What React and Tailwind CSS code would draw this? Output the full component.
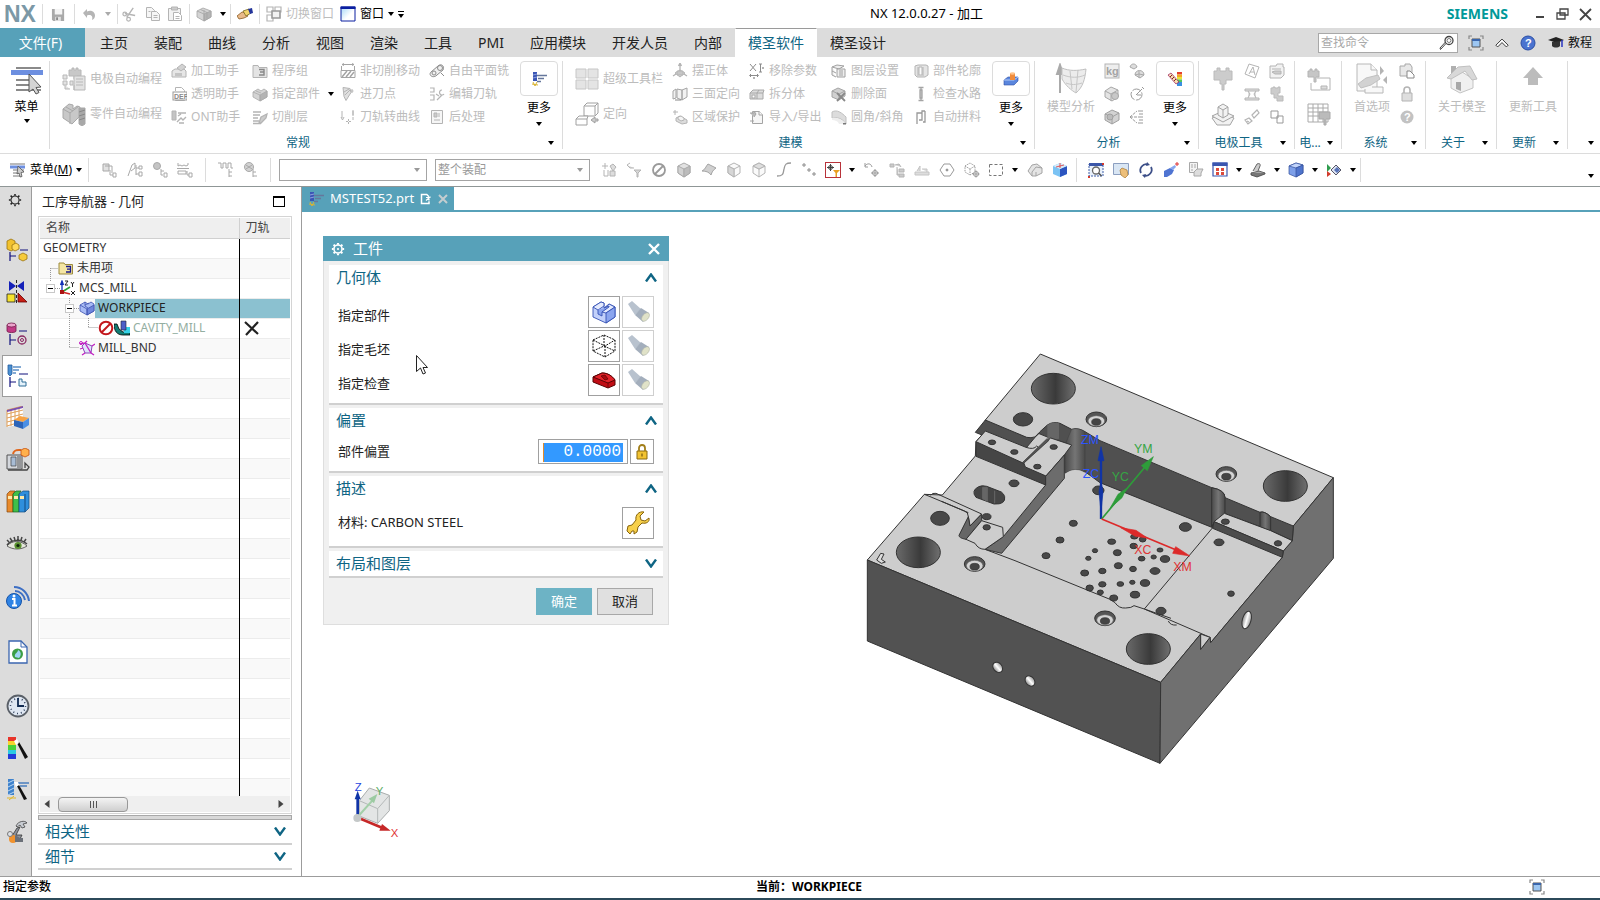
const G = '#b4b4b4'
const L = '#e6e6e6'

// small icons, drawn on a 16 x 16 grid
const icons = {
  save: <><path d="M1 2h13v13H2.500L1 13.500z" fill="#a9a9a9" /><path d="M4 2h8v6H4z" fill="#f4f4f4" /><path d="M4.500 10.500h6V15h-6z" fill="#e2e2e2" /><path d="M5.500 11h2v3h-2z" fill="#888" /></>,
  undo: <path d="M2 8l4-4v2.500c5-2 8 1 8 4 0 2-1 3.500-3 4.500 1-3 0-6-5-4.500V13z" transform="translate(0 -1)" fill="#b5b5b5" />,
  cut: <><path d="M12 1L5 11M3 7l11 2" stroke={G} strokeWidth="1.500" /><circle cx="3" cy="7.500" r="2" fill="none" stroke={G} strokeWidth="1.300" /><circle cx="7" cy="13" r="2" fill="none" stroke={G} strokeWidth="1.300" /></>,
  copy: <g fill="#f6f6f6" stroke={G}><path d="M1.500 1.500h5l3 3v7h-8z" /><path d="M6.500 5.500h5l3 3v6h-8z" /><path d="M8.500 9.500h4M8.500 11.500h4M3.500 5.500h2" /></g>,
  paste: <g fill="#f2f2f2" stroke={G}><path d="M1.500 2.500h12v12h-12z" /><path d="M4.500 1h6v3h-6z" fill="#ccc" /><path d="M6.500 6.500h5l3 3v5h-8z" fill="#fff" /><path d="M8.500 10.500h4M8.500 12.500h4" /></g>,
  cubes: <g stroke="#a4a4a4" strokeWidth=".8"><path d="M1 5l6-3 8 3v6l-7 4-7-4z" fill="#d4d4d4" /><path d="M8 8l7-3v6l-7 4z" fill="#b4b4b4" /><path d="M1 5l7 3v7M4.500 3.500L11 6.500v6M8 8V4" fill="none" /></g>,
  marker: <g><path d="M0 10l5-4 4 1 2 3-4 2-5 1z" fill="#e9b98a" stroke="#8a5a20" strokeWidth=".8" /><path d="M6 5l6-2 2 4-5 3z" fill="#f1d36b" stroke="#7a6a20" strokeWidth=".8" /><path d="M11 3l4-1 1 5-3 1z" fill="#23349b" /></g>,
  swap: <g fill="none" stroke={G} strokeWidth="1.200"><path d="M1 1h6v5H1zM9 1h6v5H9zM1 9h6v6H1z" /><path d="M6 5h8v7H6z" fill="#f2f2f2" stroke="#999" strokeWidth="1.600" /></g>,
  windowBlue: <><defs><linearGradient id="wb" x1="0" y1="0" x2="1" y2="1"><stop offset=".2" stopColor="#c2e4fa" /><stop offset=".6" stopColor="#fff" /></linearGradient></defs><path d="M1 1h14v14H1z" fill="url(#wb)" stroke="#0a1fa0" /><path d="M.5.5h15V3H.5z" fill="#0a1fa0" /></>,
  helper: <g fill={L} stroke={G}><path d="M1 8l3-2h9l2 2v6H1z" /><path d="M6 5l5-4 4 3-5 4z" fill="#d2d2d2" /><path d="M4 10h7v3H4z" fill="#c4c4c4" stroke="none" /></g>,
  def: <><path d="M4.500 5V1.500h6l3 3v10h-9V13" fill="#fff" stroke={G} /><rect x="2" y="6" width="14" height="8" fill="#fff" stroke="#999" /><text x="3" y="13" fontSize="7" fontWeight="700" fill="#888" fontFamily="Liberation Sans">DEF</text></>,
  ont: <g fill="none" stroke={G}><path d="M1 2h4v9H1z" fill="#c4c4c4" /><path d="M7 4h8M7 7l3-2M6 13l4-4 2 2 3-3M8 14h5" strokeWidth="1.400" /></g>,
  folderGroup: <g stroke={G}><path d="M1 2.500h5l1 2h8v10H1z" fill="#e4e4e4" /><path d="M7 6.500h5v5.500H7M8 9h4" fill="none" stroke="#888" strokeWidth="1.400" /></g>,
  part: <g stroke="#aaa" strokeWidth=".8"><path d="M1 6l5-3 3 2 3-2 3 2v6l-7 4-7-4z" fill="#d4d4d4" /><path d="M8 9l7-4v6l-7 4z" fill="#b4b4b4" /><path d="M1 6l7 3v6M4 5l5 2" fill="none" /></g>,
  layers: <g fill="none" stroke={G} strokeWidth="1.300"><path d="M1 3h8M1 6h7M1 9h5M1 12h6M1 14.500h8" /><path d="M9 8l6-3-1 4-5 5H7z" fill="#ccc" /></g>,
  nonCut: <g fill="none" stroke="#a4a4a4"><path d="M2 1.500h12M2 1.500l2-1M2 1.500l2 1M14 1.500l-2-1M14 1.500l-2 1M1.500 3v4M14.500 3v4M1 7.500h14v7H1z" /><path d="M2 14l5-6M6 14l5-6M10 14l4-5" strokeWidth="1.500" /></g>,
  entry: <g stroke={G} fill="#e0e0e0"><path d="M3 1.500l7 1 1 4-5 8-2-4z" /><path d="M4 6l5-3M5 9l5-5M12 3v4M10.500 5h3" fill="none" /></g>,
  toCurve: <g fill="none" stroke={G}><path d="M2 2v7M1 8l1.500 3L4 8M13 1v6M12 3h2M12 5h2M13 8v3" /><path d="M6 12.500h5M8.500 10v5" strokeDasharray="2 1" /></g>,
  planar: <g fill="#f0f0f0" stroke="#8c8c8c"><path d="M2 9l7-6c3-3 7 0 5 4l-6 5c-4 4-9 0-6-3z" /><circle cx="5" cy="10" r="2" /><circle cx="11" cy="5" r="2.500" /><path d="M12 10l3 3" /></g>,
  editPath: <g fill="none" stroke={G} strokeWidth="1.200"><path d="M1 2h4v4H1M1 9h4v5H1M8 14l5-5M7 8l3 2M13 4a2.500 2.500 0 1 0 2 4" /></g>,
  post: <g stroke={G} fill="#f6f6f6"><path d="M2.500 1.500h11v13h-11z" /><path d="M5 4h3v4H5zM10 4v4M5 11h6" fill="#ccc" /></g>,
  alignBody: <g stroke={G} fill="#ddd"><path d="M3 10l5-3 5 3-5 4z" /><path d="M8 8V1M6.500 3L8 0l1.500 3M1 13l3-2M15 13l-3-2" fill="none" strokeWidth="1.300" /><path d="M5 8h6v4H5z" fill="#c6c6c6" /></g>,
  triFace: <g stroke="#a4a4a4" fill="#f2f2f2"><path d="M1 5l3-2v9l-3 1zM5 3l5 1v10l-5-2zM10 4l5-2v9l-5 3z" /><path d="M3 14h6" stroke="#888" /></g>,
  region: <g stroke={G} fill="#dcdcdc"><path d="M3 1v5M1 3h5" fill="none" /><path d="M4 9l4-2 7 4v3l-5 1-6-3z" /><path d="M6 8l3-1 3 2v2l-3 1-3-2z" fill="#f4f4f4" /></g>,
  removeParam: <g fill="none" stroke="#8c8c8c"><path d="M1 1l6 7M7 1L1 8M10 1h3M11.500 1v8M10 9h3M1 12.500h8M2 11l-1.500 1.500L2 14M8 11l1.500 1.500L8 14" /><path d="M13 4l2 2M15 4l-2 2M4 14l2 2M6 14l-2 2" stroke="#b4b4b4" /></g>,
  splitBody: <g stroke="#a8a8a8" fill="#ddd"><path d="M1 7l3-3h11l-1 3v6H1z" /><path d="M1 7h13M8 7v6M8 7l2-3" fill="none" /><rect x="3" y="9" width="3" height="3" fill="#fff" /></g>,
  importExport: <g stroke="#a4a4a4" fill="#f6f6f6"><path d="M3.500 2.500h7l3 3v9h-10z" /><path d="M10 2v4h4" /><path d="M1 4h4V2l2 3-2 3M1 12h4" fill="#bbb" /></g>,
  layerSet: <g stroke="#a0a0a0" fill="#eee"><path d="M1 4l5-2 7 1-5 3z" /><path d="M1 4v4l4 2M1 8v4l4 2M8 6h6v8H6V6z" /><path d="M8 8h4M8 10h4M8 12h4" /></g>,
  deleteFace: <g stroke="#a4a4a4"><path d="M1 5l6-3 7 3v5l-6 4-7-3z" fill="#d0d0d0" /><path d="M1 5l7 3v6M8 8l6-3" fill="none" /><path d="M6 7l8 8M14 7l-8 8" stroke="#888" strokeWidth="1.800" /></g>,
  fillet: <g><path d="M1 3c5-3 10 1 14 5v7C11 9 6 8 1 9z" fill="#dcdcdc" stroke="#c0c0c0" /><path d="M1 9c5-1 10 1 14 6H8C7 12 4 11 1 11z" fill="#eee" /><path d="M12 14h3v1.500h-3z" fill="#777" /></g>,
  outline: <g stroke={G} fill="#e4e4e4"><path d="M2 3l3-1h8l2 1v9l-3 2H4l-2-2z" /><path d="M5 4v9M10 4v9M6 4h3v8H6z" fill="#fafafa" /></g>,
  waterLine: <g fill="none" stroke="#a4a4a4" strokeWidth="1.300"><path d="M5.500 1.500h5M8 2v12M5.500 14.500h5" /><path d="M7 4v8h2V4z" fill="#ccc" /></g>,
  autoJoin: <g fill="none" stroke="#999" strokeWidth="1.300"><path d="M4 15V4h5v7H6M12 2v11h-2M9 4V2h3" /></g>,
  kg: <><rect x="1" y="1" width="14" height="14" fill="#eee" stroke={G} /><text x="2" y="12" fontSize="11" fontWeight="700" fill="#a4a4a4" fontFamily="Liberation Sans">kg</text></>,
  cubeHole: <g stroke="#a8a8a8" fill="#e4e4e4"><path d="M1 5l6-4 7 3v7l-6 4-7-4z" /><path d="M1 5l6 3 7-4M7 8v7" fill="none" /><circle cx="11" cy="10" r="3.500" fill="#c8c8c8" /></g>,
  cubeDark: <g stroke="#a0a0a0" fill="#d2d2d2"><path d="M1 5l7-4 7 3v7l-7 4-7-4z" /><path d="M1 5l7 3 7-4M8 8v7" fill="none" /><circle cx="6" cy="8" r="3" fill="#bbb" /></g>,
  spheres: <g stroke="#a8a8a8" fill="#ddd"><path d="M1 4c1-4 6-4 7 0l-3 2zM6 12c0-6 9-6 9 0l-4 3z" /><path d="M10 8v7M6 12l4-1 5 1" fill="none" /></g>,
  gauge: <g fill="none" stroke="#999"><circle cx="7.500" cy="8.500" r="5.500" strokeDasharray="9 1.500" /><path d="M7 9l6-6M13 1l2 2M8 9h4" /></g>,
  branch: <g fill="none" stroke="#999"><path d="M1 8l7-6M1 8l7 6M1 8h7" strokeDasharray="3 1" /><path d="M9 2h5M10 5h4M9 8h5M10 11h4M9 14h5" /></g>,
  tilt: <g fill="none" stroke={G}><path d="M5 1l10 3-4 11-10-4z" /><path d="M5 11l4-7 2 8M6 9h4" /></g>,
  formH: <g fill="#e0e0e0" stroke={G}><path d="M1 3h14v2H1zM1 12h14v2H1zM4 5l2 3-2 4M12 5l-2 3 2 4" /></g>,
  pencils: <g fill="none" stroke={G} strokeWidth="1.200"><path d="M1 11l4-2 3 3-4 3zM8 6l5-5 2 3-5 5zM3 12l2 1" /></g>,
  card: <g fill="#f2f2f2" stroke={G}><path d="M1 3h6l1-2h6v3h1v8l-3 3H1z" /><path d="M3 6h9M3 9l3-1h6v3H6z" fill="#ccc" /></g>,
  toolBody: <g fill="#ccc" stroke="#bbb"><path d="M2 2h2V1h2v1h3V1h2v6H9v3h5v5H8v-3H5V8H2z" /></g>,
  twoSquares: <g fill="#fff" stroke="#999"><path d="M2 2h7v7H2zM8 7h6v7H8z" /></g>,
  pageCopy: <g fill="#e8e8e8" stroke="#a8a8a8"><path d="M1 3h5V1h5l2 3v9H1z" /><path d="M8 8h3l4 4v3H8z" fill="#fff" stroke="#888" /></g>,
  lockGray: <g fill="#dedede" stroke={G}><path d="M3 7h10v8H3z" /><path d="M5 7V4a3 3 0 0 1 6 0v3" fill="none" strokeWidth="1.600" /></g>,
  helpGray: <><circle cx="8" cy="8" r="6.500" fill="#c2c2c2" /><text x="5" y="12" fontSize="11" fontWeight="700" fill="#fff" fontFamily="Liberation Sans">?</text></>,
  moreMill: <><path d="M2 1h4v9H2z" fill="#3b56b5" /><path d="M2 4l4-1M2 7l4-1" stroke="#8ea0dc" /><path d="M6 4.500h10M7 7.500h6M6 10.500h4" stroke="#66779c" strokeWidth="1.400" /><path d="M2 11l2 4 2-4M1 13l6 1" stroke="#d9b433" fill="none" /></>,
  moreModel: <><path d="M1 9l4-3h10v4l-4 4H1z" fill="#5a86dd" stroke="#2d4fa5" strokeWidth=".6" /><path d="M1 9h10l4-3" stroke="#b6cdf8" fill="none" /><path d="M7 2h5v7H7z" fill="#f08c3c" /><ellipse cx="9.500" cy="2.500" rx="2.500" ry="1.300" fill="#ffc48c" /></>,
  moreAnalysis: <><path d="M10 1h5v2.500h-5z" fill="#e5402e" /><path d="M10 3.500h5V6h-5z" fill="#f5a623" /><path d="M10 6h5v2.500h-5z" fill="#e8e33a" /><path d="M10 8.500h5V11h-5z" fill="#53c65a" /><path d="M10 11h5v4h-5z" fill="#3a8fe0" /><path d="M1 4l3-2 8 9-3 2z" fill="#f6e2b0" stroke="#915" strokeWidth=".7" /><path d="M3 6l2-2M5 8l2-2M7 10l2-2" stroke="#822" /></>,
  menuSmall: <><path d="M0 2h15M3 8h11M3 11h8M3 14h8" stroke="#777" /><path d="M0 3.500h15v3H0z" fill="#6d8fe0" /><path d="M8 4l6 6-3 .500 1 4-2 .500-1-4-2 1z" fill="#ccc" stroke="#555" strokeWidth=".8" /></>,
  tree1: <g fill="#e2e2e2" stroke="#a8a8a8"><path d="M1 2h6v7H1z" /><path d="M3 4h7v7M8 8v5h3M11 11h3v4h-3z" fill="none" /></g>,
  tree2: <g fill="none" stroke="#a8a8a8"><path d="M1 14l4-11 3-2v5l-4 3M9 3v10M9 6h3M12 4h3v3h-3zM9 12h3M12 10h3v4h-3z" /></g>,
  tree3: <g fill="#c4c4c4" stroke="#a8a8a8"><circle cx="5" cy="4" r="3.500" /><path d="M9 7v6h2M12 11h3v4h-3zM9 9h3" fill="none" /></g>,
  tree4: <g fill="none" stroke="#a8a8a8"><path d="M1 1v3l2-1 2 1 2-1 2 1 2-1V1M0 6.500h12M1 9h8v3H1zM10 9v4h2M12 11h3v4h-3z" /></g>,
  tree5: <g fill="none" stroke="#a8a8a8"><path d="M0 1h3v5h2V1h3v5h2V1h3v5h2M11 7v8M11 10h3M11 14h3" /></g>,
  tree6: <g fill="#d2d2d2" stroke="#a8a8a8"><circle cx="6" cy="5" r="4.500" /><path d="M3 3l6 4M3 7l6-4M10 7v8M10 10h3M10 14h4" fill="none" /></g>,
  selA: <g fill="none" stroke={G}><path d="M4 1v6M1 4h6M3 8v6h4M7 8v6" /><path d="M9 4l3-2 3 3-3 4zM9 9h5v5H9z" fill="#ddd" /></g>,
  selB: <g fill="#d8d8d8" stroke={G}><path d="M1 3l3 3h4M1 3l3-2M8 8h7l-3 3v4h-1v-4z" /></g>,
  noEntry: <g fill="none" stroke="#9a9a9a" strokeWidth="1.800"><circle cx="8" cy="8" r="6" /><path d="M12 4l-8 8" /></g>,
  cubeSolid: <g stroke="#aaa" fill="#e2e2e2"><path d="M2 4l6-3 6 3v7l-6 4-6-4z" /><path d="M2 4l6 3v8l-6-4z" fill="#d2d2d2" /><path d="M8 7l6-3v7l-6 4z" fill="#bcbcbc" /></g>,
  sheet: <path d="M1 9c3-1 4-5 6-7l8 4c-3 2-4 4-5 7-2-3-5-4-9-4z" fill="#d0d0d0" stroke="#a4a4a4" />,
  cubeFace: <g stroke={G} fill="#fafafa"><path d="M2 4l6-3 6 3v7l-6 4-6-4z" /><path d="M2 4l6 3 6-3M8 7v8" /><path d="M2 4l6 3v8l-6-4z" fill="#d6d6d6" /></g>,
  cubeEdge: <g stroke={G} fill="#fafafa"><path d="M2 4l6-3 6 3v7l-6 4-6-4z" /><path d="M2 4l6 3 6-3M8 7v8" /><path d="M2 4l6 3 6-3-6-3z" fill="#dedede" /></g>,
  curve: <path d="M1 14c7 0 6-3 7-7 1-5 2-6 7-6" fill="none" stroke="#999" strokeWidth="1.300" />,
  plusses: <path d="M1 3h4M3 1v4M6 8h4M8 6v4M11 12h4M13 10v4" stroke="#8c8c8c" />,
  snapFilter: <><rect x=".5" y=".5" width="15" height="15" fill="#fff" stroke="#b8323a" /><path d="M5.500 2v7M2 5.500h7" stroke="#444" /><circle cx="5.500" cy="5.500" r="2" fill="none" stroke="#444" /><path d="M8 8h7l-3 3v4h-1.500v-4z" fill="#e8a020" /></>,
  arcTarget: <g fill="none" stroke="#999"><path d="M1 4c2-3 6-3 7 1M1 1v4h3M11 7v8M7 11h8" /><circle cx="11" cy="11" r="2.500" /></g>,
  snapTree: <g fill="#ccc" stroke={G}><path d="M1 2h4v3H1zM6 3l4-1 2 3M10 7h5v3h-5zM10 12h5v3h-5zM8 5v8h2" /></g>,
  plane: <g fill="#ddd" stroke="#c4c4c4"><path d="M1 10h14v3H1zM3 9l3-5v5M8 7h5v3" /></g>,
  hexDot: <g fill="none" stroke="#999"><path d="M5 2h6l4 6-4 6H5L1 8z" /><circle cx="8" cy="8" r="1" fill="#777" /></g>,
  cubeTarget: <g fill="none" stroke="#999"><path d="M1 4l5-3 5 3v6l-5 3-5-3zM1 4l5 3 5-3M6 7v6" strokeDasharray="1.500 1" /><circle cx="12" cy="12" r="2.500" fill="#fff" /><path d="M12 8.500v7M8.500 12h7" /></g>,
  marquee: <rect x="1.500" y="2.500" width="13" height="11" fill="none" stroke="#777" strokeDasharray="3 2" />,
  hull: <g fill="#e4e4e4" stroke="#a4a4a4"><path d="M1 9l4-6 5-1 5 4v5l-6 3H5z" /><path d="M5 14v-4l4-5 6 1M9 14v-4" fill="none" /></g>,
  cubeBlue: <><path d="M1 4l7-3 7 3v8l-7 3-7-3z" fill="#7bc3f4" /><path d="M8 7l7-3v8l-7 3z" fill="#2c55c0" /><path d="M1 4l7-3 7 3-7 3z" fill="#d6ecfb" /><path d="M8 1v5M4 5l8-2" stroke="#d33" strokeWidth=".8" /></>,
  fitView: <><path d="M1 2h14v12H1z" fill="#e9f1fb" stroke="#3e5ea8" strokeDasharray="2 1" /><path d="M1 1h14v3H1z" fill="#3b56a8" /><circle cx="8" cy="8.500" r="3.500" fill="#fff" stroke="#666" strokeWidth="1.300" /><path d="M10.500 11l3 3" stroke="#555" strokeWidth="1.600" /><path d="M0 14h2v2H0zM14 1h2v2h-2z" fill="#d33a2c" /></>,
  panView: <><path d="M.5 1.500h15v11H.5z" fill="#d9e6f4" stroke="#8c9fc0" /><path d="M7 8l2-2 5 2 1 5-3 3-4-3z" fill="#edbf7a" stroke="#a87830" strokeWidth=".7" /></>,
  rotate: <g fill="none" stroke="#3c4f88" strokeWidth="1.800"><path d="M3 11a6 6 0 0 1 7-8.500M13 5a6 6 0 0 1-7 8.500" /><path d="M9 0l3 3-4 1M7 16l-3-3 4-1" fill="#3c4f88" stroke="none" /></g>,
  pointer3d: <><path d="M1 9l6-3 4 2-2 4-5 3H1z" fill="#4f74d2" /><path d="M7 6l5-3 1 2-3 3z" fill="#88a7ee" /><path d="M14 0v4M12 2h4" stroke="#d33" /></>,
  sheets: <g fill="#f4f4f4" stroke="#a8a8a8"><path d="M1.500.5h8v10h-8z" /><path d="M3 3h2M3 5h2M3 8h2M6 3h2M6 5h2" /><path d="M6 10l3-3h6l-2 4v3H6z" fill="#ddd" /></g>,
  layout4: <><path d="M1 1h14v13H1z" fill="#fff" stroke="#3b56b0" strokeWidth="1.200" /><path d="M.5.5h15V4H.5z" fill="#3b56b0" /><path d="M4 6h3v3H4zM9 6h3v3H9zM4 10h3v3H4zM9 10h3v3H9z" fill="#dc4b3c" /></>,
  section: <g stroke="#444" strokeWidth=".8"><path d="M1 11l6 3 8-3-6-2z" fill="#aaa" /><path d="M3 9l4-7c2-1 4 0 3 2L8 9" fill="#ccc" /><path d="M1 11v2l6 2 8-3v-1" fill="#777" /></g>,
  shade: <g strokeWidth=".7" stroke="#34509c"><path d="M1 4l7-3 7 2v8l-7 4-7-3z" fill="#7d9fe8" /><path d="M1 4l7 2 7-3-7-2z" fill="#c2d4fa" /><path d="M8 6l7-3v8l-7 4z" fill="#4f74cc" /></g>,
  visibility: <><path d="M1 2l4 4-4 4z" fill="#2f9c4e" /><path d="M1 9l4 3-4 3z" fill="#d23b2c" /><path d="M5 8l5-5 5 5-5 5z" fill="#dde3f2" stroke="#556" /><path d="M8 8l3-3 3 3-3 3z" fill="#5873b8" /></>,
  fullscreen: <><path d="M1 4V1h3M12 1h3v3M15 12v3h-3M4 15H1v-3" fill="none" stroke="#888" strokeWidth="1.200" /><path d="M4 4h8v8H4z" fill="#9cc6f2" stroke="#555" /><path d="M4 4h8v2H4z" fill="#3a66ac" /></>,
  ribbonUp: <path d="M1 10.500L8 3.500l7 7-2 2-5-5-5 5z" fill="#fff" stroke="#333" strokeWidth="1.100" />,
  help: <><circle cx="8" cy="8" r="7" fill="#4a73cf" stroke="#2c4fa5" /><text x="5" y="12" fontSize="11" fontWeight="700" fill="#fff" fontFamily="Liberation Sans">?</text></>,
  cap: <><path d="M0 5l8-3 8 3-7 3z" fill="#222" /><path d="M4 7v4c2 2 6 2 8 0V6" fill="#333" /><path d="M14 5v7" stroke="#2a35c0" strokeWidth="1.500" /></>,
  search: <g fill="none" stroke="#444"><circle cx="10" cy="5.500" r="4" strokeWidth="1.300" /><circle cx="10" cy="5.500" r="2" strokeWidth=".7" /><path d="M7 8.500l-5.500 6L1 13l5.500-6" /></g>,
  unused: <><path d="M1 3h5l1 1.500h7.500v9.500H1z" fill="#f5e6a3" stroke="#9c8a3c" /><path d="M8 6.500h4.500V12H8M9 9.200h3.500" fill="none" stroke="#1a1a8c" strokeWidth="1.300" /></>,
  mcs: <><path d="M2 12V3M.5 5L2 1l1.500 4" stroke="#1230b8" fill="#1230b8" strokeWidth="1.300" /><path d="M2 12l8-5" stroke="#2da035" strokeWidth="1.600" /><path d="M2 12l8 2" stroke="#c22" strokeWidth="1.600" /><path d="M0 10h4v4H0z" fill="#a11" /><path d="M5 1h3L5 5h3M11 2l1.500 2L14 2M12.500 4v3M11 11l4 4M15 11l-4 4" stroke="#222" fill="none" /></>,
  workpiece: <g stroke="#3c52b0" strokeWidth=".8"><path d="M1 5l5-3 3 2 3-2 3 2v7l-7 4-7-4z" fill="#a9bcf5" /><path d="M8 9l7-4v6l-7 4z" fill="#6f86dc" /><path d="M1 5l7 4v6M6 5l4-2M6 2v4l3 2" fill="none" /></g>,
  forbid: <g fill="none" stroke="#c3171d" strokeWidth="2"><circle cx="8" cy="8" r="6.300" fill="#fff" /><path d="M12.500 3.500l-9 9" /></g>,
  cavity: <><path d="M0 4h3l2 5 4 3h7v3H9C3 15 0 11 0 4z" fill="#127c74" stroke="#000" strokeWidth=".8" /><path d="M9 7h7v6H10z" fill="#37d2e8" /><path d="M7 1h5v9H7z" fill="#4d5fc8" stroke="#223" strokeWidth=".6" /></>,
  bnd: <g fill="none" stroke="#c21fc2"><path d="M3 6l3-3 7 3-1 7-6 0z" fill="#dfe4fa" stroke="#8d46b8" /><path d="M1 4l5-1 2-2M13 6l3-2M12 13l3 2M6 13l-3 2M1 9l3-1M6 3l6 10" strokeWidth="1.300" /><circle cx="2" cy="3" r="1.500" /></g>,
  toolpathNone: <path d="M1 2l13 12M14 2L2 15" stroke="#222" strokeWidth="2.200" />,
  lockGold: <g stroke="#8b6a10" fill="#f2c331"><path d="M3 7h10v8H3z" /><path d="M5 7V4a3 3 0 0 1 6 0v3" fill="none" stroke="#a27f1a" strokeWidth="1.800" /><path d="M7.500 9.500h1v3h-1z" fill="#5a430a" stroke="none" /></g>,
  gearLine: <g fill="none" stroke="#222"><circle cx="8" cy="8" r="4.600" strokeWidth="1.200" /><path d="M8 1v2M8 13v2M1 8h2M13 8h2M3 3l1.500 1.500M11.500 11.500L13 13M13 3l-1.500 1.500M4.500 11.500L3 13" strokeWidth="1.800" /></g>,
  gearWhite: <g fill="none" stroke="#fff"><circle cx="8" cy="8" r="4.600" strokeWidth="1.800" /><circle cx="8" cy="8" r=".8" fill="#fff" /><path d="M8 1v2M8 13v2M1 8h2M13 8h2M3 3l1.500 1.500M11.500 11.500L13 13M13 3l-1.500 1.500M4.500 11.500L3 13" strokeWidth="2.400" /></g>,
  modified: <g fill="none" stroke="#fff" strokeWidth="2"><path d="M12 11v3H2V2h7l3 3" /><path d="M14 5l-6 5M8 6h4v4" strokeWidth="1.600" /></g>,
}

// large icons, drawn on a 24 x 24 grid
const bigIcons = {
  electrodeAuto: <g fill="#e2e2e2" stroke="#b8b8b8"><path d="M7 3h3V1h2v2h2V1h2v2h3v6h-4v3h-3V9H7z" fill="#c8c8c8" /><path d="M1 8h4v4H1zM1 14h4v4H1zM8 14h3v4H8zM12 9h11v14H12z" /><path d="M14 12h7M14 15h7M14 18h7M3 18v4h5M12 23v-5" /></g>,
  partAuto: <g stroke="#a8a8a8" fill="#c8c8c8"><path d="M1 7l6-5 4 1v4l4-3 3 1v9l-8 8-9-6z" /><path d="M1 7l7 4v11M8 11l9-7M4 5l7 4" fill="none" /><path d="M17 6h6v16l-3 2-3-2z" fill="#a8a8a8" /><path d="M17 10l6-2M17 14l6-2M17 18l6-2" stroke="#888" /></g>,
  grid4: <g fill="#e4e4e4" stroke="#c6c6c6"><path d="M1 2h10v9H1zM13 2h10v9H13zM1 13h10v9H1zM13 13h10v9H13z" /></g>,
  orient: <g fill="#fff" stroke="#a0a0a0"><path d="M9 4l3-3h11v10l-3 3H9z" /><path d="M9 4h11v10M20 4l3-3M1 17l3-3h9l-1 3v6H1zM1 17h11" /><path d="M16 18l4-3v2h3v2h-3v2z" fill="#ccc" /></g>,
  electrode: <g fill="#ccc" stroke="#bababa"><path d="M3 4h3V1h3v3h6V1h3v3h3v9h-6v4h-2v6h-2v-6H9v-4H3z" /></g>,
  stack: <g fill="#f2f2f2" stroke="#a4a4a4"><path d="M1 16l4-2h14l4 2-4 7H6z" /><path d="M1 14l11-5 11 5-11 6z" /><path d="M7 5l5-3 5 3v8l-5 3-5-3z" /><path d="M7 5l5 3 5-3M12 8v8" /></g>,
  electrodeSheet: <g fill="#c6c6c6" stroke={G}><path d="M1 4h2V2h2v2h3V2h2v2h2v6H9v5H7v-5H1z" /><path d="M10 11h13v12H4V16" fill="none" /><path d="M14 19h6v3h-6z" fill="#ddd" /></g>,
  electrodeTable: <g fill="none" stroke="#aaa"><path d="M1 2h20v18H1zM1 6h20M1 10h20M1 14h20M6 2v18M11 2v18M16 2v18" /><path d="M12 10h11v7h-4v6h-2v-6h-5z" fill="#bbb" /></g>,
}

function Icon({ name, className = 'h-4 w-4' }) {
  return <svg viewBox="0 0 16 16" className={`shrink-0 ${className}`} fill="none" aria-hidden="true">{icons[name]}</svg>
}

function BigIcon({ name }) {
  return <svg viewBox="0 0 24 24" className="h-6 w-6 shrink-0" fill="none" aria-hidden="true">{bigIcons[name]}</svg>
}

function Caret({ className = 'text-black' }) {
  return (
    <svg viewBox="0 0 6 4" className={`h-1 w-1.5 shrink-0 ${className}`} aria-hidden="true">
      <path d="M0 0h6L3 4z" fill="currentColor" />
    </svg>
  )
}

function Chevron({ open }) {
  return (
    <svg viewBox="0 0 12 9" className="h-[9px] w-3" fill="none" aria-hidden="true">
      <path d={open ? 'M1 8.500L6 1.500l5 7' : 'M1 .5l5 7 5-7'} stroke="#0f6584" strokeWidth="2.400" />
    </svg>
  )
}

function Divider() {
  return <div className="my-1 w-px shrink-0 self-stretch bg-[#dcdcdc]" />
}

/* ---------- title bar ---------- */

function TitleBar() {
  return (
    <header className="relative flex h-7 shrink-0 items-center justify-between bg-white">
      <div className="flex h-full items-center text-xs">
        <span className="w-[42px] pl-1 font-['Liberation_Sans',sans-serif] text-[23px] leading-7 font-bold text-[#7b98a6]">NX</span>
        <Divider />
        <button type="button" aria-label="保存" className="pr-2 pl-2"><Icon name="save" className="h-[15px] w-[15px]" /></button>
        <Divider />
        <button type="button" aria-label="撤销" className="flex items-center gap-2 px-1.5"><Icon name="undo" /><Caret className="text-[#aaa]" /></button>
        <Divider />
        <button type="button" aria-label="剪切" className="pl-1"><Icon name="cut" className="h-[15px] w-[15px]" /></button>
        <button type="button" aria-label="复制" className="pl-2"><Icon name="copy" /></button>
        <button type="button" aria-label="粘贴" className="px-1.5"><Icon name="paste" /></button>
        <Divider />
        <button type="button" aria-label="装配" className="flex items-center gap-2 pr-1 pl-1.5"><Icon name="cubes" /><Caret /></button>
        <Divider />
        <button type="button" aria-label="触控" className="px-1.5"><Icon name="marker" /></button>
        <Divider />
        <button type="button" className="flex items-center gap-1 px-1.5 text-[#bdbdbd]"><Icon name="swap" />切换窗口</button>
        <button type="button" className="flex items-center gap-1 text-black"><Icon name="windowBlue" />窗口<Caret /></button>
        <button type="button" aria-label="自定义" className="flex flex-col items-center gap-0.5 pl-1">
          <span className="h-px w-1.5 bg-black" />
          <Caret />
        </button>
      </div>
      <h1 className="absolute left-1/2 ml-[70px] text-[13px] text-black">NX 12.0.0.27 - 加工</h1>
      <div className="flex items-center gap-2.5 pr-2">
        <span className="pr-4 text-sm font-bold text-[#009999]">SIEMENS</span>
        <button type="button" aria-label="最小化" className="flex h-4 w-3 items-end"><span className="mb-1 ml-0.5 h-0.5 w-2 bg-[#444]" /></button>
        <button type="button" aria-label="还原">
          <svg viewBox="0 0 13 13" className="h-[13px] w-[13px]" fill="#fff" stroke="#444" strokeWidth="1.300"><path d="M4 1h8v6H4zM1 5h8v6H1z" /></svg>
        </button>
        <button type="button" aria-label="关闭">
          <svg viewBox="0 0 13 13" className="h-[13px] w-[13px]" stroke="#444" strokeWidth="1.800"><path d="M1 1l11 11M12 1L1 12" /></svg>
        </button>
      </div>
    </header>
  )
}

/* ---------- ribbon tabs ---------- */

const tabs = ['主页', '装配', '曲线', '分析', '视图', '渲染', '工具', 'PMI', '应用模块', '开发人员', '内部', '模圣软件', '模圣设计']

function TabBar() {
  return (
    <nav className="flex h-[29px] shrink-0 items-stretch justify-between bg-[#dcdcdc] text-sm">
      <div className="flex">
        <button type="button" className="mr-0.5 w-[85px] bg-[#57a1b9] pr-1 text-white">文件(F)</button>
        {tabs.map((t) => (
          <button
            key={t}
            type="button"
            className={t === '模圣软件' ? 'border border-b-0 border-t-[#9a9a9a] border-r-transparent border-l-transparent bg-white px-3 text-[#0f6584]' : 'px-[13px] text-[#222]'}
          >
            {t}
          </button>
        ))}
      </div>
      <div className="flex items-center gap-2.5 pr-2 text-xs">
        <label className="flex h-5 w-[140px] items-center border border-[#a8a8a8] bg-white px-0.5">
          <input type="text" aria-label="查找命令" placeholder="查找命令" className="w-full min-w-0 outline-none placeholder:text-[#a8a8a8]" />
          <Icon name="search" />
        </label>
        <button type="button" aria-label="全屏"><Icon name="fullscreen" /></button>
        <button type="button" aria-label="最小化功能区"><Icon name="ribbonUp" className="h-3.5 w-4" /></button>
        <button type="button" aria-label="帮助"><Icon name="help" /></button>
        <button type="button" className="flex items-center gap-1 pl-0.5 text-[#111]"><Icon name="cap" />教程</button>
      </div>
    </nav>
  )
}

/* ---------- ribbon ---------- */

function RibbonGroup({ label, children, className = '' }) {
  return (
    <>
      <section className={`flex shrink-0 flex-col pl-3 ${className}`}>
        <div className="flex h-[77px] items-start gap-[9px]">{children}</div>
        <button type="button" className="-ml-3 flex h-5 items-center pr-2 text-xs text-[#0f6584]">
          <span className="flex-1 text-center">{label}</span>
          <span className="flex w-2 justify-end"><Caret className="text-black" /></span>
        </button>
      </section>
      <Divider />
    </>
  )
}

function SmallColumn({ items, className = '' }) {
  return (
    <div className={`flex flex-col pt-0.5 ${className}`}>
      {items.map(([icon, text, caret]) => (
        <button key={icon} type="button" aria-label={text || icon} className="flex h-[23px] items-center gap-1 text-xs whitespace-nowrap text-[#bcbcbc]">
          <Icon name={icon} />
          {text}
          {caret && <span className="pl-1"><Caret /></span>}
        </button>
      ))}
    </div>
  )
}

function BigColumn({ items }) {
  return (
    <div className="flex flex-col pt-1">
      {items.map(([icon, text]) => (
        <button key={icon} type="button" aria-label={text || icon} className="flex h-[35px] items-center gap-1 text-xs whitespace-nowrap text-[#bcbcbc]">
          <BigIcon name={icon} />
          {text}
        </button>
      ))}
    </div>
  )
}

function MoreButton({ icon }) {
  return (
    <button type="button" className="ml-0.5 flex flex-col items-center text-xs text-black">
      <span className="mt-1 flex h-[35px] w-[38px] items-center justify-center rounded-sm border border-[#dcdcdc]"><Icon name={icon} /></span>
      <span className="mt-0.5 h-5 leading-5">更多</span>
      <span className="flex h-2 items-end"><Caret /></span>
    </button>
  )
}

function TallButton({ text, children }) {
  return (
    <button type="button" className="flex flex-col items-center pt-1.5 text-xs whitespace-nowrap text-[#bcbcbc]">
      <svg viewBox="0 0 32 32" className="h-8 w-8" fill="none" aria-hidden="true">{children}</svg>
      <span className="mt-0.5 h-5 leading-5">{text}</span>
    </button>
  )
}

function Ribbon() {
  return (
    <div className="flex h-24 shrink-0 items-stretch bg-white">
      <button type="button" className="flex w-[49px] flex-col items-center pt-2 pl-1 text-xs text-black">
        <svg viewBox="0 0 32 32" className="h-8 w-8" fill="none" aria-hidden="true">
          <path d="M5 3h25M5 15h18M5 20h18M5 25h25" stroke="#8a8a8a" strokeWidth="2" />
          <path d="M0 5h32v5H0z" fill="#6d8fe0" />
          <path d="M18 9l12 13-5 .5 3 5-3 1.500-3-5-4 3z" fill="#d4d4d4" stroke="#555" />
        </svg>
        <span className="h-5 leading-5">菜单</span>
        <span className="flex h-1.5 items-end"><Caret /></span>
      </button>
      <Divider />
      <RibbonGroup label="常规" className="w-[512px]">
        <BigColumn items={[['electrodeAuto', '电极自动编程'], ['partAuto', '零件自动编程']]} />
        <SmallColumn className="w-[72px]" items={[['helper', '加工助手'], ['def', '透明助手'], ['ont', 'ONT助手']]} />
        <SmallColumn className="w-[79px]" items={[['folderGroup', '程序组'], ['part', '指定部件', true], ['layers', '切削层']]} />
        <SmallColumn items={[['nonCut', '非切削移动'], ['entry', '进刀点'], ['toCurve', '刀轨转曲线']]} />
        <SmallColumn items={[['planar', '自由平面铣'], ['editPath', '编辑刀轨'], ['post', '后处理']]} />
        <MoreButton icon="moreMill" />
      </RibbonGroup>
      <RibbonGroup label="建模" className="w-[471px]">
        <BigColumn items={[['grid4', '超级工具栏'], ['orient', '定向']]} />
        <SmallColumn items={[['alignBody', '摆正体'], ['triFace', '三面定向'], ['region', '区域保护']]} />
        <SmallColumn className="w-[73px]" items={[['removeParam', '移除参数'], ['splitBody', '拆分体'], ['importExport', '导入/导出']]} />
        <SmallColumn className="w-[73px]" items={[['layerSet', '图层设置'], ['deleteFace', '删除面'], ['fillet', '圆角/斜角']]} />
        <SmallColumn items={[['outline', '部件轮廓'], ['waterLine', '检查水路'], ['autoJoin', '自动拼料']]} />
        <MoreButton icon="moreModel" />
      </RibbonGroup>
      <RibbonGroup label="分析" className="w-[163px]">
        <TallButton text="模型分析">
          <path d="M5 30V8M2 11l3-9 3 9z" fill="#aaa" stroke="#aaa" strokeWidth="2" />
          <path d="M7 5c7 3 15 3 24 1-1 10-3 18-10 24-5-3-10-7-14-14z" fill="#ececec" stroke="#c0c0c0" />
          <path d="M8 12c8 3 15 3 22 0M15 8l2 18M23 7l-2 22M11 20c5 2 10 2 16 0" stroke="#c6c6c6" />
        </TallButton>
        <SmallColumn items={[['kg'], ['cubeHole'], ['cubeDark']]} />
        <SmallColumn items={[['spheres'], ['gauge'], ['branch']]} />
        <MoreButton icon="moreAnalysis" />
      </RibbonGroup>
      <RibbonGroup label="电极工具" className="w-[95px]">
        <BigColumn items={[['electrode'], ['stack']]} />
        <SmallColumn items={[['tilt'], ['formH'], ['pencils']]} />
        <SmallColumn items={[['card'], ['toolBody'], ['twoSquares']]} />
      </RibbonGroup>
      <RibbonGroup label="电..." className="w-[46px]">
        <BigColumn items={[['electrodeSheet'], ['electrodeTable']]} />
      </RibbonGroup>
      <RibbonGroup label="系统" className="w-[83px]">
        <TallButton text="首选项">
          <path d="M1 1h14l6 6v21H1z" fill="#f8f8f8" stroke="#b8b8b8" />
          <path d="M15 1v6h6M16 24h11v6H9v-4" fill="#f8f8f8" stroke="#b8b8b8" />
          <path d="M2 21l8-6 12-3 2 4-9 6-10 3z" fill="#d2d2d2" stroke="#c0c0c0" />
          <path d="M24 3l4 5-4 4zM31 13v8l-4-4z" fill="#b4b4b4" />
        </TallButton>
        <SmallColumn items={[['pageCopy'], ['lockGray'], ['helpGray']]} />
      </RibbonGroup>
      <RibbonGroup label="关于" className="w-[70px]">
        <TallButton text="关于模圣">
          <path d="M5 3h5v9H5z" fill="#b0b0b0" />
          <path d="M5 15l8-8 14 9v9l-13 5-9-5z" fill="#f0f0f0" stroke="#c4c4c4" />
          <path d="M1 15L12 4l12-1 7 13-5 1-7-9-14 8z" fill="#d8d8d8" stroke="#c0c0c0" />
          <path d="M10 19h5v9l-5-2z" fill="#a8a8a8" />
        </TallButton>
      </RibbonGroup>
      <RibbonGroup label="更新" className="w-[70px]">
        <TallButton text="更新工具">
          <path d="M16 4l10 11h-5v7H11v-7H6z" fill="#bcbcbc" />
        </TallButton>
      </RibbonGroup>
      <button type="button" aria-label="功能区选项" className="flex flex-1 items-end justify-end pr-1.5 pb-2"><Caret /></button>
    </div>
  )
}

/* ---------- selection bar ---------- */

function ToolStrip({ names }) {
  return names.map((n) => (
    <button key={n} type="button" aria-label={n} className="flex w-[25px] justify-center"><Icon name={n} /></button>
  ))
}

function DropTool({ name }) {
  return (
    <button type="button" aria-label={name} className="flex items-center gap-2 px-1"><Icon name={name} /><Caret /></button>
  )
}

function ComboBox({ label, value, className }) {
  return (
    <label className={`relative flex h-[22px] items-center border border-[#a4a4a4] ${className}`}>
      <select aria-label={label} defaultValue={value} className="w-full appearance-none bg-transparent px-0.5 text-xs text-[#999] outline-none">
        <option value={value}>{value}</option>
      </select>
      <span className="pointer-events-none absolute right-1.5"><Caret className="text-[#999]" /></span>
    </label>
  )
}

function SelectionBar() {
  return (
    <div className="flex h-[34px] shrink-0 items-center border-y border-t-[#dcdcdc] border-b-[#8f9696] bg-white">
      <button type="button" className="flex items-center gap-1 pr-1.5 pl-2.5 text-xs whitespace-nowrap text-black">
        <Icon name="menuSmall" />
        <span>菜单(<u>M</u>)</span>
        <Caret />
      </button>
      <Divider />
      <div className="flex px-2"><ToolStrip names={['tree1', 'tree2', 'tree3', 'tree4']} /></div>
      <Divider />
      <div className="flex px-[7px]"><ToolStrip names={['tree5', 'tree6']} /></div>
      <Divider />
      <ComboBox label="类型过滤器" value="" className="ml-2 w-[148px]" />
      <ComboBox label="选择范围" value="整个装配" className="mr-1.5 ml-2 w-[155px]" />
      <ToolStrip names={['selA', 'selB', 'noEntry', 'cubeSolid', 'sheet', 'cubeFace', 'cubeEdge', 'curve', 'plusses']} />
      <DropTool name="snapFilter" />
      <ToolStrip names={['arcTarget', 'snapTree', 'plane', 'hexDot', 'cubeTarget']} />
      <DropTool name="marquee" />
      <ToolStrip names={['hull', 'cubeBlue']} />
      <div className="w-1" />
      <Divider />
      <div className="w-1.5" />
      <ToolStrip names={['fitView', 'panView', 'rotate', 'pointer3d', 'sheets']} />
      <DropTool name="layout4" />
      <DropTool name="section" />
      <DropTool name="shade" />
      <DropTool name="visibility" />
      <Divider />
      <button type="button" aria-label="工具条选项" className="flex flex-1 justify-end pt-3 pr-1.5"><Caret /></button>
    </div>
  )
}

/* ---------- resource bar ---------- */

const resources = [
  {
    id: '装配导航器',
    art: <><path d="M1 3l4-2 4 2v8l-4 2-4-2z" fill="#f2c22e" stroke="#9a7410" strokeWidth=".8" /><path d="M6 7l4-2 3 2v4l-4 2-3-2z" fill="#ffd95a" stroke="#9a7410" strokeWidth=".8" /><path d="M4 14v9M4 18h6M14 12h8" stroke="#10107c" strokeWidth="1.200" /><path d="M13 17l4-2 4 2v4l-4 2-4-2z" fill="#f6cb3c" stroke="#9a7410" strokeWidth=".8" /></>,
  },
  {
    id: '约束导航器',
    art: <><path d="M3 1l7 5-7 5zM18 1l-7 5 7 5z" fill="#1420b8" /><path d="M10.500 0v24" stroke="#222" strokeDasharray="3 2" /><path d="M1 14h8v8H1z" fill="#f6e22c" stroke="#222" strokeWidth=".8" /><path d="M12 13l9 9h-9z" fill="#c81e14" stroke="#600" strokeWidth=".8" /></>,
  },
  {
    id: '部件导航器',
    art: <><path d="M1 3v6c0 2 9 2 9 0V3" fill="#c23a86" stroke="#701848" strokeWidth=".8" /><ellipse cx="5.500" cy="3" rx="4.500" ry="2" fill="#eba3cb" stroke="#701848" strokeWidth=".8" /><path d="M4 12v11M4 18h6M13 9h8" stroke="#10107c" strokeWidth="1.200" /><circle cx="16" cy="18" r="4" fill="none" stroke="#8a2a62" strokeWidth="1.300" /><circle cx="16" cy="18" r="1.500" fill="none" stroke="#8a2a62" /></>,
  },
  {
    id: '工序导航器',
    active: true,
    art: <><path d="M2 1h4v9l-2 2-2-2z" fill="#4a90d2" stroke="#235c9c" strokeWidth=".8" /><path d="M7 3h8M7 6h6M7 9h3" stroke="#5b8fc6" strokeWidth="1.300" /><path d="M4 13v10M4 18h6M13 10h9" stroke="#10107c" strokeWidth="1.200" /><path d="M13 15h3v3h4v4h-7z" fill="#e4f2fb" stroke="#2f6d96" /></>,
  },
  {
    id: '机床导航器',
    art: <><path d="M1 4l16-4v18L1 21z" fill="#fff" /><path d="M1 4l16-4M1 8l16-4M1 12l16-4M1 16l16-4M1 20l10-3M1 4v17M5 3v17M9 2v17M13 1v14" stroke="#e0a05a" /><path d="M1 4l16-4v2L1 6z" fill="#7a52b0" /><path d="M8 14l6-4 9 2-6 4z" fill="#f7a243" /><path d="M8 14l9 2v7l-9-3z" fill="#2c64b8" /><path d="M17 16l6-4v7l-6 4z" fill="#4b8fe4" /></>,
  },
  {
    id: '加工特征导航器',
    art: <><path d="M1 7h15v14H1z" fill="#d4d7dc" stroke="#555" /><path d="M5 9h5v9H5z" fill="#a8bcd4" stroke="#444" strokeWidth=".7" /><path d="M12 8v12M14 8v12" stroke="#555" /><path d="M7 6c1-5 5-4 8-4" stroke="#e0661c" strokeWidth="2" /><path d="M15 2l4-2 4 2v5l-4 2-4-2z" fill="#ffb04c" stroke="#c24b10" strokeWidth=".8" /><path d="M2 22h19l2-3-4-4v5" stroke="#444" strokeWidth="1.300" /></>,
  },
  {
    id: '重用库',
    art: <><path d="M1 4l3-3h5L7 4v18H1z" fill="#e88a2c" stroke="#84450b" strokeWidth=".7" /><path d="M7 4l3-3h5l-2 3v18H7z" fill="#3fbf4a" stroke="#175f1e" strokeWidth=".7" /><path d="M13 4l4-3h6v17l-4 4h-6z" fill="#2f8fdc" stroke="#134a80" strokeWidth=".7" /><path d="M2 6h4v3H2zM8 6h4v3H8zM14 6h4v3h-4z" fill="#ffe9a8" /><path d="M19 4v18" stroke="#134a80" /></>,
  },
  {
    id: 'HD3D',
    art: <><path d="M1 14c5-6 14-6 20 0-6 4-14 4-20 0z" fill="#e4e6dc" stroke="#444" strokeWidth=".8" /><circle cx="12" cy="13.500" r="3.600" fill="#5a9130" /><circle cx="12" cy="13.500" r="1.600" fill="#10240a" /><path d="M1 13c5-6 14-6 20-1M3 10L1 8M6 9L4 6M9 8L8 5M12 8V4M15 8l1-3M18 10l2-3" stroke="#444" strokeWidth="1.500" /></>,
  },
  {
    id: 'Web 浏览器',
    gap: true,
    art: <><circle cx="8" cy="15" r="7.500" fill="#2f83e4" stroke="#1553a8" /><path d="M6 13h2.500v7M6 19.500h5" stroke="#fff" strokeWidth="2" /><circle cx="8" cy="10" r="1.500" fill="#fff" /><path d="M8 1c8 0 14 6 15 14M9 5c5 0 9 4 10 9" stroke="#3d6fc4" strokeWidth="2" /></>,
  },
  {
    id: '互联网',
    gap: true,
    art: <><path d="M3 1h12l6 6v16H3z" fill="#fff" stroke="#3b66b0" strokeWidth="1.300" /><path d="M15 1v6h6" stroke="#3b66b0" /><circle cx="11.500" cy="14" r="5.500" fill="#3c9e45" /><path d="M9 17c-1-4 3-4 3-7 4 2 3 6 1 8z" fill="#9fd4f4" /></>,
  },
  {
    id: '历史记录',
    gap: true,
    art: <><circle cx="12" cy="12" r="10.500" fill="#dfe7f2" stroke="#5a6068" strokeWidth="1.800" /><circle cx="12" cy="12" r="7.500" stroke="#2c3c58" strokeDasharray="1 2.900" strokeWidth="1.500" /><path d="M12 4v8h6" stroke="#102a52" strokeWidth="1.800" /></>,
  },
  {
    id: '系统材料',
    art: <><path d="M2 1h8v4H2z" fill="#e8342a" /><path d="M2 5h8v4H2z" fill="#f6d32e" /><path d="M2 9h8v5H2z" fill="#49d23a" /><path d="M2 14h8v4H2z" fill="#2bc9e2" /><path d="M2 18h8v5H2z" fill="#2339d8" /><path d="M11 7l2-1 9 15-3 2z" fill="#111" /><path d="M8 5l3-2 2 4-3 2z" fill="#fff" /></>,
  },
  {
    id: '加工向导',
    art: <><path d="M2 1h6v16H2z" fill="#3f82cc" /><path d="M2 5l6-3M2 9l6-3M2 13l6-3M2 17l6-3" stroke="#bcd8f2" /><path d="M12 5h11M14 8h7" stroke="#4a7dbd" strokeWidth="1.600" /><path d="M1 20h9M3 22l5-4" stroke="#e0b52a" /><path d="M11 8l2-1 8 14-3 1z" fill="#111" /><path d="M8 4l4 0 1 3-3 2z" fill="#fff" /></>,
  },
  {
    id: '角色',
    art: <><path d="M10 6c2-5 9-6 11-3l-4 1 2 3-3 1-2-3-3 2z" fill="#c8ccd2" stroke="#444" strokeWidth=".8" /><path d="M11 8l3-1-4 8 6 0-2 4-8-3z" fill="#8f939b" stroke="#333" strokeWidth=".8" /><circle cx="7" cy="19" r="4" fill="#f0922e" /><path d="M9 15l5 3h3v4h-8z" fill="#6b7078" /><circle cx="4" cy="14" r="2.500" fill="#dfe2e8" stroke="#777" /></>,
  },
]

function ResourceBar() {
  return (
    <aside className="flex w-8 shrink-0 flex-col border-r border-[#9c9c9c] bg-[#dcdcdc]">
      <button type="button" aria-label="设置" className="mb-4 flex h-[26px] items-center justify-center pr-0.5"><Icon name="gearLine" className="h-3.5 w-3.5" /></button>
      {resources.map((r) => (
        <button
          key={r.id}
          type="button"
          aria-label={r.id}
          className={`flex h-[42px] shrink-0 items-center justify-end ${r.gap ? 'mt-3' : ''} ${r.active ? '-mr-px ml-0.5 border-y border-l border-[#9c9c9c] bg-white pr-0.5' : 'pr-px'}`}
        >
          <svg viewBox="0 0 24 24" className="h-6 w-6" fill="none" aria-hidden="true">{r.art}</svg>
        </button>
      ))}
    </aside>
  )
}

/* ---------- operation navigator ---------- */

const treeRows = [
  { text: 'GEOMETRY', indent: 'pl-0' },
  { text: '未用项', indent: 'pl-[18px]', icon: 'unused' },
  { text: 'MCS_MILL', indent: 'pl-1.5', icon: 'mcs', box: true },
  { text: 'WORKPIECE', indent: 'pl-[25px]', icon: 'workpiece', box: true, selected: true },
  { text: 'CAVITY_MILL', indent: 'pl-[58px]', icon: 'cavity', status: true },
  { text: 'MILL_BND', indent: 'pl-[39px]', icon: 'bnd' },
]

function TreeRow({ row, odd }) {
  const bg = odd ? 'bg-[#f9f9f9]' : 'bg-white'
  if (!row) {
    return (
      <tr className={`h-5 border-b border-[#ececec] ${bg}`}>
        <td className="border-r border-black" />
        <td />
      </tr>
    )
  }
  return (
    <tr className={`h-5 border-b border-[#ececec] ${bg}`}>
      <td className="border-r border-black p-0">
        <div className={`flex h-[19px] items-center ${row.indent}`}>
          {row.box && <span className="flex h-[9px] w-[9px] shrink-0 items-center justify-center border border-[#c8c8c8] bg-white"><span className="h-px w-[5px] bg-black" /></span>}
          {row.box && <span className="w-[5px] border-t border-dotted border-[#999]" />}
          {row.status && <Icon name="forbid" />}
          {row.icon && <Icon name={row.icon} />}
          <span className={`flex h-full flex-1 items-center pl-[3px] ${row.selected ? 'bg-[#8bc1d0] text-[#222]' : row.status ? 'text-[#93aea1]' : 'text-[#333]'}`}>{row.text}</span>
        </div>
      </td>
      <td className={`p-0 pl-1 ${row.selected ? 'bg-[#8bc1d0]' : ''}`}>{row.status && <Icon name="toolpathNone" />}</td>
    </tr>
  )
}

function Navigator() {
  return (
    <section className="flex w-[270px] shrink-0 flex-col border-r border-[#9c9c9c] bg-white pr-[9px] pl-1.5">
      <div className="flex h-[29px] shrink-0 items-center justify-between pr-[7px] pl-1 text-[13px] text-[#222]">
        <h2>工序导航器 - 几何</h2>
        <button type="button" aria-label="最大化" className="h-[11px] w-3 border border-t-2 border-black" />
      </div>
      <div className="flex min-h-0 flex-1 flex-col border border-[#d4d4d4] p-px">
        <div className="relative min-h-0 flex-1 overflow-hidden">
          <table className="w-full table-fixed border-collapse text-xs">
            <thead>
              <tr className="h-5 border-b border-[#d0d0d0] bg-[#efefef] text-left text-[#444]">
                <th className="w-[199px] border-r border-[#d0d0d0] p-0 pl-1.5 font-normal">名称</th>
                <th className="p-0 pl-1.5 font-normal">刀轨</th>
              </tr>
            </thead>
            <tbody>
              {Array.from({ length: 28 }, (_, i) => <TreeRow key={i} row={treeRows[i]} odd={i % 2 === 1} />)}
            </tbody>
          </table>
          {/* dotted connectors of the tree */}
          <svg viewBox="0 0 100 160" className="pointer-events-none absolute top-0 left-0 h-40 w-[100px]" fill="none" stroke="#999" strokeDasharray="1 1" aria-hidden="true">
            <path d="M10.500 50v14M10.500 50.500h8M29.500 80v5M29.500 96v34M29.500 129.500h9M48.500 100v10M48.500 109.500h9" />
          </svg>
        </div>
        <div className="flex h-4 shrink-0 items-center bg-[#efefef] pr-1.5 pl-1">
          <svg viewBox="0 0 5 8" className="h-2 w-1.5"><path d="M5 0v8L0 4z" fill="#444" /></svg>
          <div className="ml-2 flex h-[15px] w-[70px] items-center justify-center gap-0.5 rounded-sm border border-[#989898] bg-linear-to-b from-[#f4f4f4] to-[#cfcfcf]">
            <span className="h-[7px] w-px bg-[#555]" />
            <span className="h-[7px] w-px bg-[#555]" />
            <span className="h-[7px] w-px bg-[#555]" />
          </div>
          <svg viewBox="0 0 5 8" className="ml-auto h-2 w-1.5"><path d="M0 0v8l5-4z" fill="#444" /></svg>
        </div>
      </div>
      <div className="mt-px h-[5px] shrink-0 border border-[#a8a8a8] bg-[#d8d8d8]" />
      {['相关性', '细节'].map((t) => (
        <button key={t} type="button" className="flex h-[25px] shrink-0 items-center justify-between border-b-2 border-[#d0d0d0] pr-1.5 pl-[7px] text-[15px] text-[#0f6584]">
          {t}
          <Chevron />
        </button>
      ))}
      <div className="h-1.5 shrink-0" />
    </section>
  )
}

/* ---------- workpiece dialog ---------- */

function Card({ title, open, children }) {
  return (
    <section className="border-b-2 border-[#d0d0d0] bg-white">
      <button type="button" className="flex h-[25px] w-full items-center justify-between pr-1.5 pl-[7px] text-[15px] text-[#0f6584]">
        {title}
        <Chevron open={open} />
      </button>
      {children}
    </section>
  )
}

const geometryRows = [
  {
    text: '指定部件',
    art: <g stroke="#3450b4" strokeWidth=".9"><path d="M1 7l8-5 3 1v5l5-4 6 3v10l-9 6-13-6z" fill="#c2d0fa" /><path d="M1 7l5 3 6-4V3L9 2zM10 12l7-8 6 3-9 6z" fill="#e4eafd" /><path d="M6 10v4l4 2v-4l7-5v-1l-5 2" fill="#8ba5ee" /><path d="M14 13l9-6v10l-9 6z" fill="#8ba5ee" /></g>,
  },
  {
    text: '指定毛坯',
    art: <path d="M1 6l11-5 11 5v11l-10 6L1 17zM1 6l12 6 10-6M13 12v11M12 1v11L1 17M12 12l11 5" stroke="#111" strokeDasharray="2 1" />,
  },
  {
    text: '指定检查',
    art: <g stroke="#5a0404"><path d="M1 9l9-4c6 0 10 3 13 7v5l-7 3-15-6z" fill="#c00c14" /><path d="M1 9l9-4c6 0 10 3 13 7l-7 3z" fill="#e2222a" /><path d="M16 15v5M9 8l4-1 3 4-3 1z" fill="#a80a10" strokeWidth=".7" /></g>,
  },
]

function IconButton({ label, faded, children }) {
  return (
    <button type="button" aria-label={label} className={`flex h-8 w-8 items-center justify-center border bg-white ${faded ? 'border-[#cfcfcf]' : 'border-[#a0a0a0]'}`}>
      <svg viewBox="0 0 24 24" className="h-6 w-6" fill="none" aria-hidden="true">{children}</svg>
    </button>
  )
}

function WorkpieceDialog() {
  return (
    <div role="dialog" aria-label="工件" className="absolute top-6 left-[21px] w-[346px] border border-[#dedede] bg-[#f0f0f0] text-[13px] text-[#222]">
      <div className="-mx-px -mt-px flex h-[25px] items-center bg-[#57a1b9] px-2 text-[15px] text-white">
        <Icon name="gearWhite" className="h-3.5 w-3.5" />
        <h2 className="pl-2">工件</h2>
        <button type="button" aria-label="关闭" className="ml-auto">
          <svg viewBox="0 0 14 14" className="h-3.5 w-3.5" stroke="#fff" strokeWidth="2.400"><path d="M2 2l10 10M12 2L2 12" /></svg>
        </button>
      </div>
      <div className="flex flex-col gap-[3px] px-[5px] pt-1">
        <Card title="几何体" open>
          <div className="flex flex-col gap-0.5 pt-1.5 pr-[9px] pb-[7px] pl-[9px]">
            {geometryRows.map((r) => (
              <div key={r.text} className="flex items-center gap-0.5">
                <span className="mr-auto pt-2">{r.text}</span>
                <IconButton label={r.text}>{r.art}</IconButton>
                <IconButton label="显示" faded>
                  <path d="M2 4l4-3 9 8-6 6z" fill="#b8c2ce" />
                  <path d="M9 15l6-7 8 5-6 9z" fill="#a3aebc" />
                  <ellipse cx="19.500" cy="17" rx="5" ry="3" transform="rotate(-50 19.500 17)" fill="#e0e2c8" stroke="#b0b6a8" strokeWidth=".6" />
                </IconButton>
              </div>
            ))}
          </div>
        </Card>
        <Card title="偏置" open>
          <div className="flex items-center gap-0.5 pt-1.5 pr-[9px] pb-[7px] pl-[9px]">
            <label htmlFor="part-offset" className="mr-auto">部件偏置</label>
            <div className="h-[25px] w-[90px] border border-[#a0a0a0] bg-white px-1 py-0.5">
              <input id="part-offset" type="text" defaultValue="0.0000" className="h-[19px] w-full border-l border-[#e08a2c] bg-[#3399ff] pr-0.5 text-right font-['Liberation_Mono',monospace] text-base leading-[19px] text-white outline-none" />
            </div>
            <button type="button" aria-label="公式" className="flex h-[25px] w-6 items-center justify-center border border-[#a0a0a0]"><Icon name="lockGold" /></button>
          </div>
        </Card>
        <Card title="描述" open>
          <div className="flex items-center pt-1.5 pr-[9px] pb-[7px] pl-[9px]">
            <span className="mr-auto">材料: CARBON STEEL</span>
            <IconButton label="材料">
              <path d="M23 7l-4 3-4-1-1-4 4-4c-5-1-9 3-8 8l-4 5-4 1-1 5 3 3 2-3 2 0 0 3 3-2 1-5 4-4c4 1 8-1 7-5z" fill="#f7d04a" stroke="#86630c" />
            </IconButton>
          </div>
        </Card>
        <Card title="布局和图层" />
      </div>
      <div className="flex justify-end gap-[5px] pt-2.5 pr-[15px] pb-[9px]">
        <button type="button" className="h-[27px] w-14 bg-[#6db3c5] text-white">确定</button>
        <button type="button" className="h-[27px] w-14 border border-[#a8a8a8] bg-[#e0e0e0]">取消</button>
      </div>
    </div>
  )
}

/* ---------- graphics area ---------- */

const bigHoles = [[580, 146], [175, 637], [1276, 438], [865, 927]]
const counterBores = [[709, 238], [344, 672], [1099, 402], [735, 835]]
const smallHoles = [
  [489, 238, 29, 20], [240, 535, 28, 21], [396, 307, 11, 7], [463, 336, 11, 7], [581, 321, 11, 7], [532, 380, 11, 7],
  [462, 430, 15, 10], [380, 562, 11, 8], [380, 530, 13, 9], [715, 451, 17, 13], [640, 550, 12, 9], [600, 600, 12, 9],
  [558, 647, 12, 9], [705, 632, 8, 6], [685, 655, 8, 6], [976, 561, 18, 13], [1096, 545, 12, 8], [1077, 607, 15, 10],
  [1254, 610, 11, 8], [755, 605, 12, 8], [823, 590, 11, 7], [848, 598, 10, 8], [821, 618, 11, 8], [772, 638, 12, 9],
  [900, 630, 9, 6], [845, 656, 10, 7], [881, 651, 8, 6], [915, 657, 14, 10], [775, 677, 12, 9], [819, 687, 10, 8],
  [885, 693, 15, 10], [727, 693, 11, 8], [727, 733, 11, 8], [781, 732, 10, 7], [817, 727, 8, 6], [855, 729, 14, 10],
  [721, 757, 9, 7], [761, 774, 12, 9], [825, 764, 14, 10], [903, 813, 15, 11], [1113, 761, 10, 8], [674, 699, 12, 9],
  [689, 744, 11, 9],
]

function MoldPlate() {
  return (
    <svg viewBox="0 0 1440 1290" className="absolute top-[128px] left-[558px] h-[430px] w-[480px]" fill="none" stroke="#333" strokeWidth="3" strokeLinejoin="round" role="img" aria-label="WORKPIECE">
      <defs>
        <linearGradient id="bore"><stop offset="0" stopColor="#6a6a6a" /><stop offset=".55" stopColor="#3a3a3a" /><stop offset="1" stopColor="#707070" /></linearGradient>
        <linearGradient id="corner"><stop offset="0" stopColor="#4a4a4a" /><stop offset=".5" stopColor="#757575" /><stop offset="1" stopColor="#4a4a4a" /></linearGradient>
        <linearGradient id="drill"><stop offset="0" stopColor="#888" /><stop offset=".5" stopColor="#fff" /><stop offset="1" stopColor="#999" /></linearGradient>
      </defs>

      <path d="M541 42l879 371-120 145-3 44-27 31-3 19-215 256-2-16-28 36v-46L902 1027 22 660l171-197 54 2 99-117 2-43 28-32v-33z" fill="#cdcdcd" />
      <path d="M22 660l880 367-2 243L22 903z" fill="#525252" />
      <path d="M902 1027l120-145v46l28-36 2 16 215-256 3-19 27-31 3-44 120-145v242L900 1270z" fill="#707070" />

      {/* walls of the pocket */}
      <path d="M376 240l124 52q28 6 40-17l22-20q18-12 38-5l35 18q20-6 40 7l45 27 335 141q40 7 40 30l105 44q12-5 32 13l68 28-3 44-65-30-139-52-31 25-4 18-338-135-45-33q-30-19-60 3v-68l20-15-63-20-37-15-35 42q-8 12-32 4l-122-49z" fill="#505050" />
      <path d="M562 255q18-12 35-5v46l-35 12z" fill="#666" stroke="none" />
      <path d="M617 310l18-42q20-6 40 7v122q-30-19-60 3v-68z" fill="url(#corner)" strokeWidth="1" />
      <path d="M1055 443q40 7 40 30v47l-31 25-9 15z" fill="url(#corner)" />
      <path d="M1200 517q12-5 32 13v44l-32-13z" fill="url(#corner)" />

      {/* left ledges and the sloping side wall */}
      <path d="M348 305l143 60 66 44v26l-209-86z" fill="#464646" />
      <path d="M376 273l122 49q24 8 32-4l5 4-44 48-143-65z" fill="#cdcdcd" />
      <path d="M491 368l81-74 63 21-22 30-55 63-62-27z" fill="#cdcdcd" />
      <path d="M491 370l75-68-6-5-72 70z" fill="#555" strokeWidth="2" />
      <path d="M613 345v70L425 640l-50-12 55-38 127-155v-26z" fill="#6c6c6c" />

      <path d="M1093 520l-31 25 208 88 27-31-65-30z" fill="#cdcdcd" />
      <path d="M1062 545l-4 20 209 87 3-19z" fill="#4c4c4c" />
      <path d="M1058 563L853 807" />

      {/* front ledge of the pocket */}
      <path d="M193 463l20 8 100 42q12 3 12 17l5 28 35-36-137-62q-12-2-16 6M245 484l80 34" fill="none" />
      <path d="M325 530l5 28 35-36v20l-47 56q-22-4-21-12z" fill="#666" />
      <path d="M365 542l63 20 2 28-55 38q-20 0-30-18l-27-12z" fill="#cdcdcd" />
      <path d="M375 628l90 34 285 116 15 10q12 18 32 16 18 0 25-7l31 10 197 85" />
      <path d="M925 843q6 14 25 12M853 807l80 28" />
      <path d="M1022 882v46l28-36z" fill="#cdcdcd" />
      <path d="M50 660l12-20 10 2-8 16 12 8-12 4z" fill="#ddd" />

      {/* slot */}
      <path d="M356 440q-24 12-8 32l54 20q36 2 32-22-2-8-10-14l-44-17q-14-4-24 1z" fill="#454545" />
      <path d="M368 442v34l14 8v-42zM404 452v38" fill="#666" stroke="#666" />

      {bigHoles.map(([x, y]) => <ellipse key={x} cx={x} cy={y} rx="66" ry="46" fill="url(#bore)" />)}
      {counterBores.map(([x, y]) => (
        <g key={x}>
          <ellipse cx={x} cy={y} rx="31" ry="22" fill="#555" />
          <ellipse cx={x} cy={y + 5} rx="25" ry="16" fill="#d4d4d4" stroke="#666" strokeWidth="2" />
          <ellipse cx={x} cy={y + 8} rx="14" ry="10" fill="#444" strokeWidth="2" />
        </g>
      ))}
      {smallHoles.map(([x, y, rx, ry]) => <ellipse key={`${x}-${y}`} cx={x} cy={y} rx={rx} ry={ry} fill="#484848" />)}
      <ellipse cx="413" cy="982" rx="13" ry="17" transform="rotate(-40 413 982)" fill="url(#drill)" />
      <ellipse cx="510" cy="1023" rx="13" ry="17" transform="rotate(-40 510 1023)" fill="url(#drill)" />
      <ellipse cx="1160" cy="840" rx="13" ry="27" transform="rotate(15 1160 840)" fill="url(#drill)" />

      {/* coordinate systems */}
      <g fontFamily="Liberation Sans" fontSize="37" strokeWidth="7">
        <g stroke="#1034a6" fill="#1034a6">
          <path d="M723 537V350" />
          <path d="M723 320l9 42h-18zM723 425l6 30-6 60-6-60z" strokeWidth="2" />
        </g>
        <g stroke="#2e9c3a" fill="#2e9c3a">
          <path d="M725 537l135-162" strokeWidth="5" />
          <path d="M880 350l-18 42-18-15zM800 445l-14 28-36 32 24-42z" strokeWidth="2" />
        </g>
        <g stroke="#dc2a2a" fill="#dc2a2a">
          <path d="M725 537l240 100" strokeWidth="5" />
          <path d="M990 648l-52-8 9-20zM862 594l-36-5-44-26 46 8z" strokeWidth="2" />
        </g>
        <g stroke="none">
          <text x="663" y="312" fill="#2b54ff">ZM</text>
          <text x="668" y="414" fill="#2b54ff">ZC</text>
          <text x="822" y="338" fill="#36a544">YM</text>
          <text x="755" y="424" fill="#36a544">YC</text>
          <text x="823" y="642" fill="#e03434">XC</text>
          <text x="940" y="692" fill="#e03434">XM</text>
        </g>
      </g>
    </svg>
  )
}

function ViewTriad() {
  return (
    <svg viewBox="0 0 360 300" className="absolute bottom-4 left-[18px] h-[100px] w-[120px]" fill="none" aria-hidden="true">
      <path d="M118 122l30-38 60 22v46l-35 38-55-22z" fill="#e3e5e5" stroke="#a9adad" strokeWidth="3" />
      <path d="M118 122l55 24 35-40M173 146v44" stroke="#b4b8b8" strokeWidth="3" />
      <path d="M118 165l45-50" stroke="#a3cfa8" strokeWidth="6" />
      <path d="M172 102l-10 28-16-14z" fill="#9ccaa2" />
      <path d="M113 170v-60" stroke="#1034a6" strokeWidth="8" />
      <path d="M113 92l9 26h-18z" fill="#1034a6" />
      <path d="M118 175l68 28" stroke="#c62828" strokeWidth="8" />
      <path d="M212 212l-34 0 8-20z" fill="#c62828" />
      <circle cx="112" cy="174" r="12" fill="#c4c8c8" />
      <g fontFamily="Liberation Sans" fontSize="34">
        <text x="104" y="94" fill="#2846e0">Z</text>
        <text x="167" y="104" fill="#5cae66">Y</text>
        <text x="212" y="230" fill="#e03434">X</text>
      </g>
    </svg>
  )
}

function GraphicsArea() {
  return (
    <main className="flex min-w-0 flex-1 flex-col bg-white">
      <div className="flex h-[25px] shrink-0 border-b-2 border-[#57a1b9]">
        <div className="flex h-full items-center gap-1.5 bg-[#57a1b9] px-1.5 text-[13px] text-white">
          <Icon name="moreMill" />
          <span>MSTEST52.prt</span>
          <Icon name="modified" className="h-3 w-3" />
          <button type="button" aria-label="关闭部件">
            <svg viewBox="0 0 10 10" className="h-2.5 w-2.5" stroke="#c4cdd0" strokeWidth="2"><path d="M1 1l8 8M9 1L1 9" /></svg>
          </button>
        </div>
      </div>
      <div className="relative min-h-0 flex-1 overflow-hidden">
        <MoldPlate />
        <ViewTriad />
        <WorkpieceDialog />
        <svg viewBox="0 0 12 20" className="absolute top-[143px] left-[114px] h-5 w-3" fill="#fff" stroke="#222" aria-hidden="true">
          <path d="M.5.5v16l4-3.500 2.500 6 2.500-1L7 12.500h4.500z" />
        </svg>
      </div>
    </main>
  )
}

export default function App() {
  return (
    <div className="flex h-screen flex-col overflow-hidden bg-white font-['Noto_Sans','Noto_Sans_CJK_SC',sans-serif] select-none">
      <TitleBar />
      <TabBar />
      <Ribbon />
      <SelectionBar />
      <div className="flex min-h-0 flex-1">
        <ResourceBar />
        <Navigator />
        <GraphicsArea />
      </div>
      <footer className="flex h-6 shrink-0 items-center border-t border-[#9c9c9c] border-b-2 border-b-[#2c4a5a] bg-white px-[3px] pb-0.5 text-xs font-medium text-black">
        <span className="w-[753px]">指定参数</span>
        <span className="font-bold">当前：WORKPIECE</span>
        <button type="button" aria-label="全屏显示" className="mr-[52px] ml-auto"><Icon name="fullscreen" /></button>
      </footer>
    </div>
  )
}
